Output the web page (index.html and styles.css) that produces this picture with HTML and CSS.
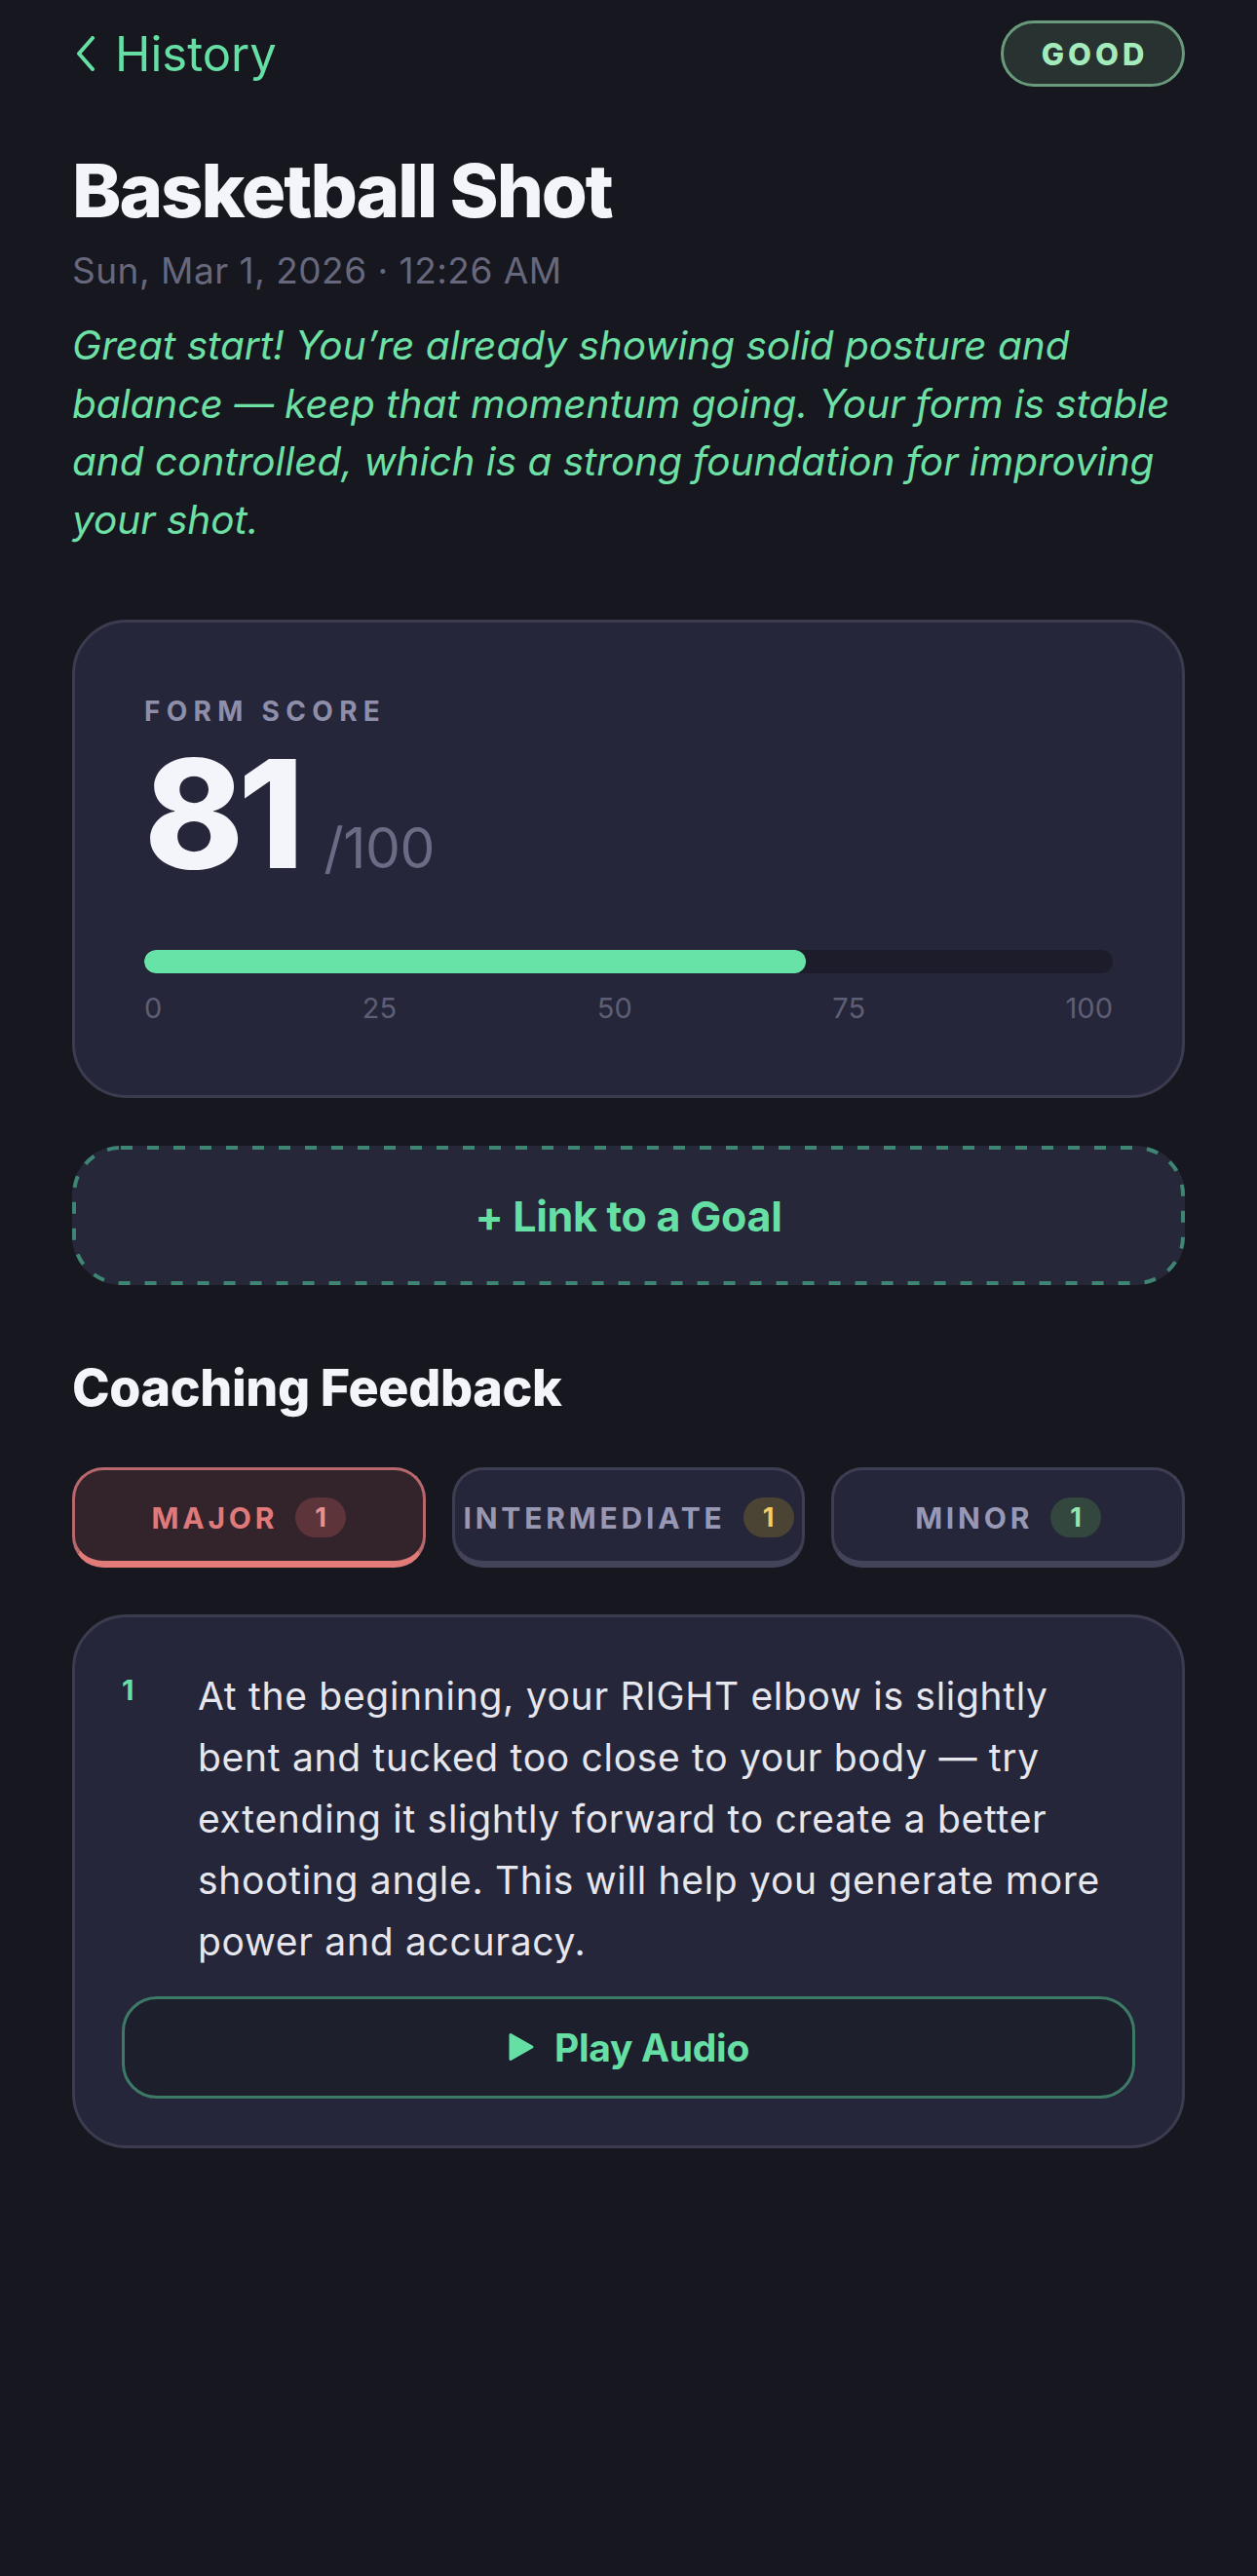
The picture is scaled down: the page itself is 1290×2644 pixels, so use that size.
FILE: index.html
```html
<!DOCTYPE html>
<html lang="en">
<head>
<meta charset="utf-8">
<title>Basketball Shot</title>
<link rel="stylesheet" href="styles.css">
</head>
<body>
<div class="page">
  <header class="topbar">
    <a class="back">
      <svg class="chev" width="22" height="36" viewBox="0 0 22 36"><path d="M18 2 L4 18 L18 34" fill="none" stroke="#66dfa5" stroke-width="4" stroke-linecap="round" stroke-linejoin="round"/></svg>
      <span>History</span>
    </a>
    <span class="grade">GOOD</span>
  </header>

  <h1 class="title">Basketball Shot</h1>
  <div class="date">Sun, Mar 1, 2026 · 12:26 AM</div>
  <p class="summary">Great start! You’re already showing solid posture and balance — keep that momentum going. Your form is stable and controlled, which is a strong foundation for improving your shot.</p>

  <section class="score-card">
    <div class="label">FORM SCORE</div>
    <div class="score-row">
      <span class="score">81</span><span class="outof">/100</span>
    </div>
    <div class="bar"><div class="bar-fill" style="width:68.3%"></div></div>
    <div class="ticks"><span>0</span><span>25</span><span>50</span><span>75</span><span>100</span></div>
  </section>

  <button class="goal">
    <svg class="goal-border" aria-hidden="true"><rect class="goal-rect"/></svg>
    <span class="goal-text">+ Link to a Goal</span>
  </button>

  <h2 class="section-title">Coaching Feedback</h2>

  <div class="tabs">
    <div class="tab tab-major">MAJOR <span class="count">1</span></div>
    <div class="tab tab-inter">INTERMEDIATE <span class="count">1</span></div>
    <div class="tab tab-minor">MINOR <span class="count">1</span></div>
  </div>

  <section class="feedback-card">
    <div class="item">
      <span class="num">1</span>
      <p class="item-text">At the beginning, your RIGHT elbow is slightly bent and tucked too close to your body — try extending it slightly forward to create a better shooting angle. This will help you generate more power and accuracy.</p>
    </div>
    <button class="play">
      <svg width="28" height="30" viewBox="0 0 28 30"><path d="M3 2.5 L25 15 L3 27.5 Z" fill="#66dfa5" stroke="#66dfa5" stroke-width="3" stroke-linejoin="round"/></svg>
      <span>Play Audio</span>
    </button>
  </section>
</div>
</body>
</html>
```

FILE: styles.css
```css
* { box-sizing: border-box; }
html, body {
  margin: 0;
  padding: 0;
  background: #16171f;
}
body {
  font-family: Inter, "Noto Sans", "Liberation Sans", sans-serif;
  color: #f2f2fa;
  min-height: 2644px;
}
.page {
  padding: 21px 74px 0 74px;
}
.topbar {
  display: flex;
  align-items: center;
  justify-content: space-between;
  height: 68px;
}
.back {
  display: flex;
  align-items: center;
  gap: 19px;
  color: #66dfa5;
  font-size: 49px;
  line-height: 1;
  margin-left: 3px;
}
.chev { display: block; }
.grade {
  display: inline-flex;
  align-items: center;
  justify-content: center;
  height: 68px;
  width: 189px;
  border: 3px solid #6a9a7c;
  background: #283230;
  border-radius: 34px;
  color: #a3ebbd;
  font-weight: 800;
  font-size: 31px;
  letter-spacing: 4px;
  padding-left: 4px;
}
.title {
  margin: 61px 0 0 0;
  font-size: 76px;
  line-height: 90px;
  font-weight: 800;
  letter-spacing: -2.1px;
  color: #f4f4fb;
}
.date {
  margin-top: 14px;
  font-size: 37px;
  line-height: 48px;
  color: #67677d;
  letter-spacing: 0.5px;
}
.summary {
  margin: 23px 0 0 0;
  font-size: 40.5px;
  line-height: 59.5px;
  font-style: italic;
  color: #6ee0a6;
  letter-spacing: 0;
}
.score-card {
  margin-top: 73px;
  background: #252639;
  border: 3px solid #3b3c50;
  border-radius: 56px;
  padding: 74px 71px 71px 71px;
}
.label {
  font-size: 28px;
  line-height: 34px;
  font-weight: 700;
  letter-spacing: 6.3px;
  color: #8e8eaa;
}
.score-row {
  display: flex;
  align-items: baseline;
  margin-top: 11px;
  height: 154px;
}
.score {
  font-size: 154px;
  line-height: 154px;
  font-weight: 800;
  letter-spacing: -6px;
  color: #f4f4fb;
}
.outof {
  margin-left: 26px;
  font-size: 57px;
  line-height: 1;
  color: #6b6b85;
  letter-spacing: -0.5px;
}
.bar {
  margin-top: 63px;
  height: 24px;
  border-radius: 12px;
  background: #1c1c2a;
  overflow: hidden;
}
.bar-fill {
  height: 100%;
  background: #68e3a8;
  border-radius: 12px;
}
.ticks {
  margin-top: 18px;
  display: flex;
  justify-content: space-between;
  font-size: 29px;
  line-height: 36px;
  color: #5e5e76;
}
.goal {
  position: relative;
  display: flex;
  align-items: center;
  justify-content: center;
  width: 100%;
  margin-top: 49px;
  height: 143px;
  background: #262739;
  border: none;
  border-radius: 50px;
  color: #66dfa5;
  font-family: inherit;
  font-size: 43px;
  font-weight: 700;
  letter-spacing: -0.3px;
  padding: 0;
}
.goal-border {
  position: absolute;
  inset: 0;
  width: 100%;
  height: 100%;
  overflow: visible;
}
.goal-rect {
  x: 2px;
  y: 2px;
  width: calc(100% - 4px);
  height: calc(100% - 4px);
  rx: 48px;
  ry: 48px;
  fill: none;
  stroke: #3f8574;
  stroke-width: 4px;
  stroke-dasharray: 12 15;
}
.goal-text { position: relative; }
.section-title {
  margin: 75px 0 0 0;
  font-size: 52px;
  line-height: 62px;
  font-weight: 800;
  letter-spacing: -0.4px;
  color: #f4f4fb;
}
.tabs {
  margin-top: 50px;
  display: grid;
  grid-template-columns: 1fr 1fr 1fr;
  gap: 27px;
}
.tab {
  height: 103px;
  display: flex;
  align-items: center;
  justify-content: center;
  gap: 18px;
  border: 3px solid #3d3e52;
  border-bottom-width: 7px;
  border-bottom-color: #43445a;
  background: #252639;
  border-radius: 32px;
  font-size: 30px;
  font-weight: 700;
  letter-spacing: 3.8px;
  color: #9898b5;
  padding-top: 4px;
}
.count {
  display: inline-flex;
  align-items: center;
  justify-content: center;
  width: 52px;
  height: 41px;
  border-radius: 21px;
  font-size: 27px;
  letter-spacing: 0;
}
.tab-major {
  background: #33232b;
  border-color: #b8686c;
  border-bottom-color: #e07b78;
  color: #e07a7a;
}
.tab-major .count { background: #5c343a; color: #e89090; }
.tab-inter .count { background: #4b4334; color: #f2cc66; }
.tab-minor .count { background: #34473f; color: #93e6b0; }
.feedback-card {
  margin-top: 48px;
  background: #252639;
  border: 3px solid #3b3c50;
  border-radius: 56px;
  padding: 50px 48px 48px 48px;
}
.item {
  display: flex;
  align-items: flex-start;
}
.num {
  width: 78px;
  flex: none;
  font-size: 29px;
  line-height: 50px;
  font-weight: 700;
  color: #66dfa5;
}
.item-text {
  margin: 0;
  font-size: 39px;
  line-height: 62.9px;
  color: #e6e6ee;
  letter-spacing: 0.7px;
}
.play {
  margin-top: 24px;
  width: 100%;
  height: 105px;
  display: flex;
  align-items: center;
  justify-content: center;
  gap: 20px;
  background: #1e1f2d;
  border: 3px solid #3d7a66;
  border-radius: 36px;
  color: #66dfa5;
  font-family: inherit;
  font-size: 39px;
  font-weight: 700;
  letter-spacing: -0.3px;
}
.play svg { display: block; }
```
